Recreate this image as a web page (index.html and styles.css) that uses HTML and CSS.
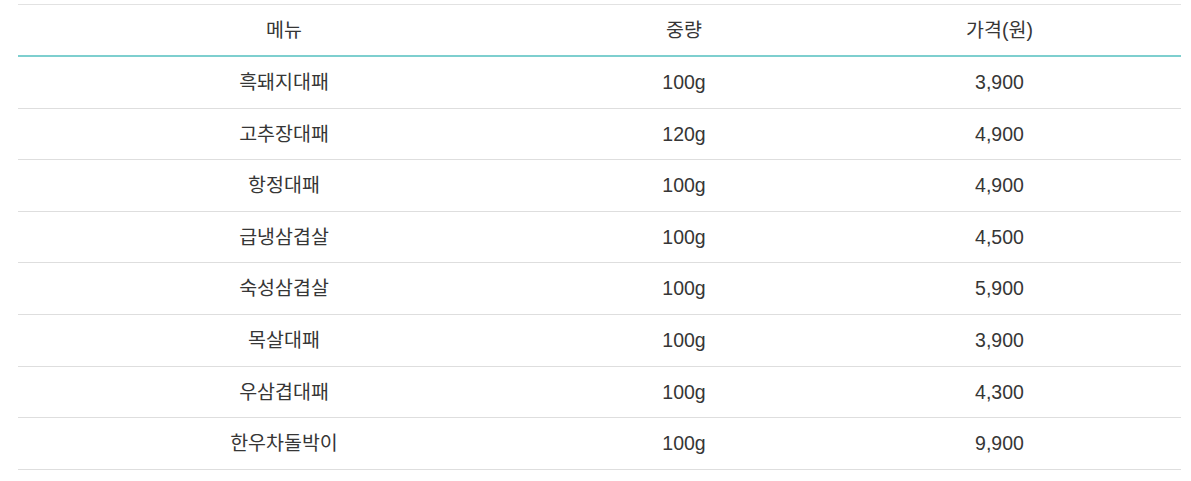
FILE: index.html
```html
<!DOCTYPE html>
<html lang="ko">
<head>
<meta charset="utf-8">
<title>메뉴</title>
<link rel="stylesheet" href="styles.css">
</head>
<body>
<div class="wrap">
<table class="menu">
<colgroup><col class="c1"><col class="c2"><col class="c3"></colgroup>
<thead>
<tr><th>메뉴</th><th>중량</th><th>가격(원)</th></tr>
</thead>
<tbody>
<tr><td>흑돼지대패</td><td>100g</td><td>3,900</td></tr>
<tr><td>고추장대패</td><td>120g</td><td>4,900</td></tr>
<tr><td>항정대패</td><td>100g</td><td>4,900</td></tr>
<tr><td>급냉삼겹살</td><td>100g</td><td>4,500</td></tr>
<tr><td>숙성삼겹살</td><td>100g</td><td>5,900</td></tr>
<tr><td>목살대패</td><td>100g</td><td>3,900</td></tr>
<tr><td>우삼겹대패</td><td>100g</td><td>4,300</td></tr>
<tr><td>한우차돌박이</td><td>100g</td><td>9,900</td></tr>
</tbody>
</table>
</div>
</body>
</html>
```

FILE: styles.css
```css
html, body {
  margin: 0;
  padding: 0;
  background: #ffffff;
}
.wrap {
  padding: 4px 10px 0 18px;
}
.menu {
  width: 1163px;
  border-collapse: collapse;
  table-layout: fixed;
  font-family: "Liberation Sans", "Noto Sans CJK KR", sans-serif;
  font-size: 19.5px;
  color: #363636;
}
.c1 { width: 532px; }
.c2 { width: 268px; }
.c3 { width: 363px; }
.menu th,
.menu td {
  text-align: center;
  font-weight: normal;
  padding: 11px 0 10px;
  line-height: 29.6px;
  border-bottom: 1px solid #dedede;
}
.menu thead th {
  border-top: 1px solid #e2e2e2;
  border-bottom: 2px solid #7ecfcf;
  padding: 11px 0 10px;
  line-height: 29px;
}
```
